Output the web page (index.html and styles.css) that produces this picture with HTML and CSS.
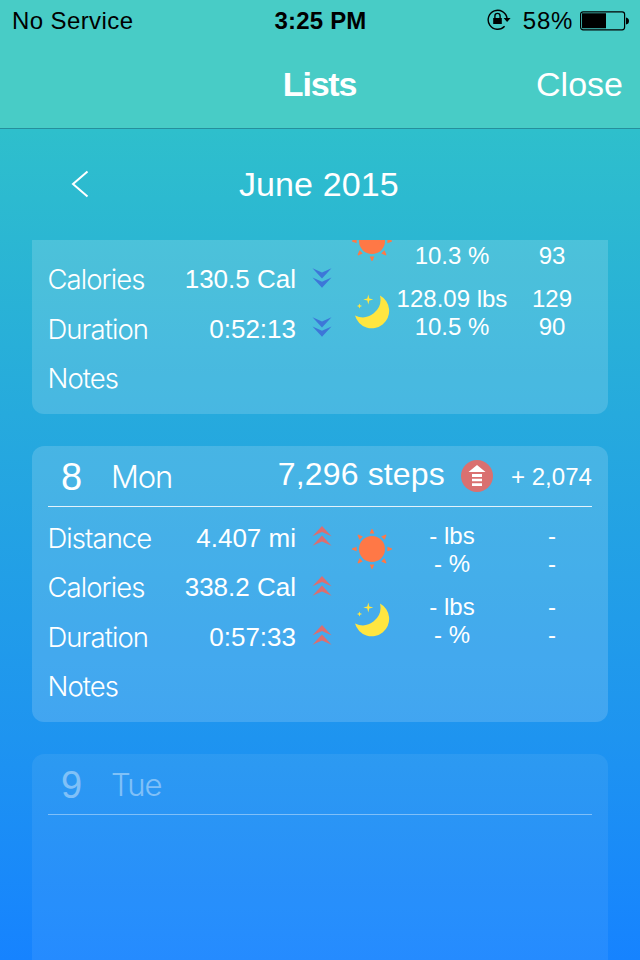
FILE: index.html
```html
<!DOCTYPE html>
<html lang="en">
<head>
<meta charset="utf-8">
<title>Lists</title>
<link rel="stylesheet" href="styles.css">
</head>
<body>
<svg class="defs" width="0" height="0">
  <symbol id="up" viewBox="0 0 20 20"><path d="M.5 10.300 10 0l9.500 10.300L10 6zM.5 19.800 10 9.500l9.500 10.300L10 15.500z"/></symbol>
  <symbol id="down" viewBox="0 0 20 20"><path d="M.5.200 10 4.500 19.500.200 10 10.500zM.5 9.500 10 13.800l9.500-4.300L10 19.800z"/></symbol>
  <symbol id="sun" viewBox="0 0 40 40">
    <circle cx="20" cy="20" r="13"/>
    <path id="ray" d="M17.700 4.600h4.600L20.400 0h-.8z"/>
    <use href="#ray" transform="rotate(45 20 20)"/><use href="#ray" transform="rotate(90 20 20)"/>
    <use href="#ray" transform="rotate(135 20 20)"/><use href="#ray" transform="rotate(180 20 20)"/>
    <use href="#ray" transform="rotate(225 20 20)"/><use href="#ray" transform="rotate(270 20 20)"/>
    <use href="#ray" transform="rotate(315 20 20)"/>
  </symbol>
  <symbol id="moon" viewBox="0 0 36 36">
    <path d="M26 1.500A17.400 17.400 0 1 1 1 21.500 17.800 17.800 0 0 0 26 1.500zM14.300.5l1 4 4 1-4 1-1 4-1-4-4-1 4-1zM5.500 9.400l.7 1.900 1.900.7-1.900.7-.7 1.900-.7-1.900-1.900-.7 1.900-.7z"/>
  </symbol>
</svg>
<div class="phone">
  <header class="top">
    <div class="status">
      <span class="carrier">No Service</span>
      <span class="clock">3:25 PM</span>
      <div class="power">
        <svg class="lock" viewBox="0 0 24 22"><path d="M17.600 17.300A9.500 9.500 0 1 1 20.100 9.500" fill="none" stroke="#000" stroke-width="1.400"/><path d="M16.600 9h7L20.100 13zM6.200 9h8.600v6H6.200z"/><path d="M7.900 9.500V7a2.600 2.600 0 0 1 5.200 0v2.500" fill="none" stroke="#000" stroke-width="1.400"/></svg>
        <span class="percent">58%</span>
        <svg class="battery" viewBox="0 0 50 20"><rect x=".6" y=".8" width="44" height="18" rx="2.500" fill="none" stroke="#000" stroke-width="1.200"/><path d="M2 2.300h24v15H2zM46 6.500q3 .5 3 3.500t-3 3.500z"/></svg>
      </div>
    </div>
    <nav class="nav"><h1 class="title">Lists</h1><span class="close">Close</span></nav>
  </header>
  <div class="month">
    <svg class="back" viewBox="0 0 18 28"><path d="M16.500 1.500 2 14l14.500 12.500" fill="none" stroke="#fff" stroke-width="2"/></svg>
    <span>June 2015</span>
  </div>
  <main class="list">
    <section class="card scrolled">
      <div class="head"></div>
      <div class="body">
        <div class="rows">
          <div class="row"></div>
          <div class="row"><span class="label">Calories</span><span class="value">130.5 Cal</span><svg class="trend low"><use href="#down"/></svg></div>
          <div class="row"><span class="label">Duration</span><span class="value">0:52:13</span><svg class="trend low"><use href="#down"/></svg></div>
          <div class="row"><span class="label">Notes</span></div>
        </div>
        <div class="icons"><svg class="sun"><use href="#sun"/></svg><svg class="moon"><use href="#moon"/></svg></div>
        <div class="metrics">
          <div class="group"><span></span><span></span><span>10.3 %</span><span>93</span></div>
          <div class="group"><span>128.09 lbs</span><span>129</span><span>10.5 %</span><span>90</span></div>
        </div>
      </div>
    </section>
    <section class="card">
      <div class="head"><span class="day">8</span><span class="weekday">Mon</span><span class="steps">7,296 steps</span>
        <svg class="badge" viewBox="0 0 32 32"><circle cx="16" cy="16" r="16" fill="#da7070"/><path fill="#fff" d="M16 5 24.500 12h-17zM11 14h10v3H11zM11 18.700h10v2.600H11zM11 23.200h10V26H11z"/></svg>
        <span class="delta">+ 2,074</span></div>
      <div class="body">
        <div class="rows">
          <div class="row"><span class="label">Distance</span><span class="value">4.407 mi</span><svg class="trend"><use href="#up"/></svg></div>
          <div class="row"><span class="label">Calories</span><span class="value">338.2 Cal</span><svg class="trend"><use href="#up"/></svg></div>
          <div class="row"><span class="label">Duration</span><span class="value">0:57:33</span><svg class="trend"><use href="#up"/></svg></div>
          <div class="row"><span class="label">Notes</span></div>
        </div>
        <div class="icons"><svg class="sun"><use href="#sun"/></svg><svg class="moon"><use href="#moon"/></svg></div>
        <div class="metrics">
          <div class="group"><span>- lbs</span><span>-</span><span>- %</span><span>-</span></div>
          <div class="group"><span>- lbs</span><span>-</span><span>- %</span><span>-</span></div>
        </div>
      </div>
    </section>
    <section class="card future">
      <div class="head"><span class="day">9</span><span class="weekday">Tue</span></div>
    </section>
  </main>
</div>
</body>
</html>
```
FILE: styles.css
```css
* { box-sizing: border-box; }
body { margin: 0; font-family: "Liberation Sans", sans-serif; color: #fff; }
svg { display: block; flex: none; }
.defs { position: absolute; }
.phone { width: 640px; height: 960px; overflow: hidden; display: flex; flex-direction: column; background: linear-gradient(#32c8c6 0, #2ebfcc 130px, #26aadd 414px, #1e94f0 738px, #1683ff 960px); }
.top { height: 129px; flex: none; background: #48ccc6; border-bottom: 1px solid #268f9c; }
.status { height: 40px; display: grid; grid-template-columns: 1fr auto 1fr; padding: 0 11px 0 12px; color: #000; font-size: 24px; line-height: 41px; }
.carrier { letter-spacing: .4px; }
.clock { font-weight: bold; letter-spacing: .2px; }
.power { display: flex; justify-content: flex-end; align-items: center; margin-right: -1px; }
.lock { width: 24px; height: 22px; margin: 0 12px 2px 0; }
.percent { letter-spacing: .7px; margin-right: 7px; }
.battery { width: 50px; height: 20px; }
.nav { height: 88px; display: grid; grid-template-columns: 1fr auto 1fr; align-items: center; padding-right: 17px; font-size: 34px; line-height: 88px; }
.title { grid-column: 2; margin: 0 -8px 0 8px; font-size: 34px; letter-spacing: -1.2px; }
.close { text-align: right; }
.month { height: 111px; flex: none; display: flex; align-items: center; font-size: 34px; letter-spacing: .1px; }
.back { width: 18px; height: 28px; margin: 0 150px 2px 71px; }
.list { height: 720px; overflow: hidden; padding: 0 32px; }
.card { height: 276px; margin-bottom: 32px; border-radius: 12px; background: rgba(255,255,255,.155); }
.scrolled { margin-top: -102px; }
.head { height: 61px; margin: 0 16px; border-bottom: 1px solid #e4f3fc; display: flex; align-items: center; white-space: nowrap; }
.day { width: 47px; font-size: 38px; text-align: center; padding-top: 2px; }
.weekday { font-family: Inter, sans-serif; font-weight: 300; font-size: 31px; letter-spacing: -1.1px; margin-left: 16px; }
.steps { margin-left: auto; font-size: 32px; line-height: 56px; margin-bottom: 5px; letter-spacing: .15px; }
.badge { width: 32px; height: 32px; margin: 0 18px 0 16px; }
.delta { font-size: 24px; padding-top: 1px; letter-spacing: .05px; }
.body { display: grid; grid-template-columns: 300px 40px 1fr; padding-left: 16px; }
.rows { padding-top: 6px; }
.row { height: 49.5px; display: flex; align-items: center; }
.label { flex: 1; font-family: Inter, sans-serif; font-weight: 300; font-size: 27.5px; letter-spacing: -.95px; margin-left: -.5px; padding-bottom: .5px; }
.value { font-size: 26px; padding-top: 1px; }
.trend { width: 20px; height: 20px; margin: 0 16px 3px; fill: #dc6e70; }
.low { fill: #3d76d8; }
.icons { display: flex; flex-direction: column; align-items: center; padding-top: 22px; margin-left: 8px; }
.sun { width: 40px; height: 40px; fill: #ff7846; }
.moon { width: 36px; height: 36px; margin-top: 33px; fill: #ffe640; }
.metrics { display: flex; flex-direction: column; gap: 15px; padding-top: 15px; font-size: 24px; line-height: 28px; text-align: center; }
.group { display: grid; grid-template-columns: 128px 72px; grid-template-rows: 28px 28px; white-space: nowrap; }
.future { background: rgba(255,255,255,.065); }
.future .head { border-color: rgba(255,255,255,.4); }
.future .day, .future .weekday { opacity: .4; }
```
